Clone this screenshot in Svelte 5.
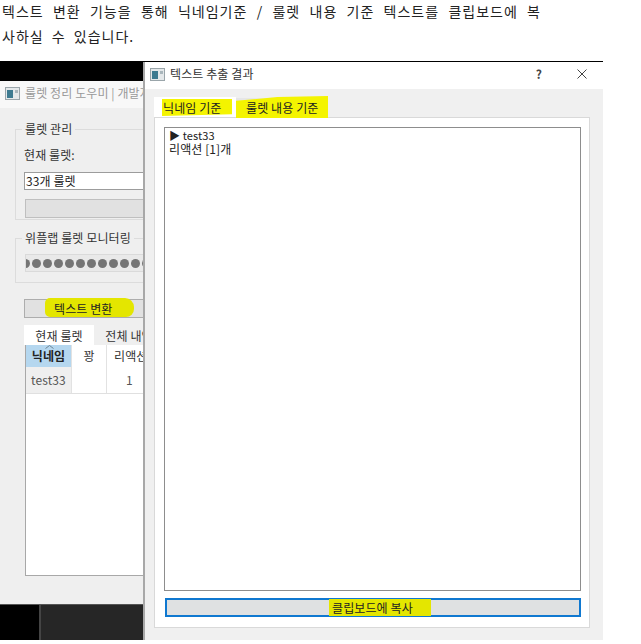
<script lang="ts">
  const dots = Array.from({ length: 14 });
  const columns = [
    { label: '닉네임', cls: 'nick' },
    { label: '꽝', cls: 'miss' },
    { label: '리액션', cls: 'react' }
  ];
</script>

{#snippet winIcon()}
  <svg class="win-icon" width="15" height="13" viewBox="0 0 15 13" aria-hidden="true">
    <rect x="0.5" y="0.5" width="14" height="12" fill="#e4e8ea" stroke="#9aa5aa" />
    <rect x="2" y="3" width="6" height="8" fill="#3d7a90" />
    <rect x="10" y="3" width="3" height="3" fill="#a9b6bc" />
  </svg>
{/snippet}

<div class="page">
  <div class="intro">
    <p class="justified">텍스트 변환 기능을 통해 닉네임기준 / 룰렛 내용 기준 텍스트를 클립보드에 복</p>
    <p class="last">사하실 수 있습니다.</p>
  </div>

  <div class="desktop">
    <div class="taskbar">
      <div class="start"></div>
    </div>

    <section class="window back">
      <header class="titlebar">
        {@render winIcon()}
        <span class="back-title">룰렛 정리 도우미 | 개발자</span>
      </header>
      <div class="back-body">
        <fieldset class="group first">
          <legend>룰렛 관리</legend>
          <div class="label">현재 룰렛:</div>
          <div class="input">33개 룰렛</div>
          <div class="disabled-btn"></div>
        </fieldset>

        <fieldset class="group second">
          <legend>위플랩 룰렛 모니터링</legend>
          <div class="dots">
            {#each dots as _}
              <i></i>
            {/each}
          </div>
        </fieldset>

        <div class="btn convert"><span class="stroke">텍스트 변환</span></div>

        <div class="back-tabs">
          <span class="back-tab on">현재 룰렛</span>
          <span class="back-tab">전체 내역</span>
        </div>
        <div class="table">
          <div class="row head">
            {#each columns as col}
              <div class="cell {col.cls}">
                {#if col.cls === 'nick'}
                  <svg class="sort" width="9" height="4" viewBox="0 0 9 4" aria-hidden="true">
                    <path d="M0.5 3.5 L4.5 0.5 L8.5 3.5" fill="none" stroke="#6d8595" />
                  </svg>
                {/if}
                {col.label}
              </div>
            {/each}
          </div>
          <div class="row body">
            <div class="cell nick">test33</div>
            <div class="cell miss"></div>
            <div class="cell react">1</div>
          </div>
        </div>
      </div>
    </section>

    <section class="window dialog">
      <header class="titlebar">
        {@render winIcon()}
        <span class="dialog-title">텍스트 추출 결과</span>
        <span class="help">?</span>
        <svg class="close" width="10" height="10" viewBox="0 0 10 10" aria-hidden="true">
          <path d="M0.5 0.5 L9.5 9.5 M9.5 0.5 L0.5 9.5" stroke="#444" fill="none" />
        </svg>
      </header>
      <div class="dialog-body">
        <div class="tabs">
          <span class="tab on"><span class="mark">닉네임 기준</span></span>
          <span class="tab other"><span class="mark wide">룰렛 내용 기준</span></span>
        </div>
        <div class="pane">
          <div class="textarea">
            <div class="latin">▶ test33</div>
            <div>리액션 [1]개</div>
          </div>
          <div class="copy-btn"><span class="mark copy">클립보드에 복사</span></div>
        </div>
      </div>
    </section>
  </div>
</div>

<style>
  :global(body) {
    margin: 0;
    background: #fff;
  }

  .page {
    width: 641px;
    height: 644px;
    overflow: hidden;
    font-family: "Noto Sans CJK KR", "Noto Sans", sans-serif;
    color: #222;
  }

  .intro {
    margin-top: -1px;
    padding-left: 2px;
    height: 62px;
    font-size: 14px;
    line-height: 25px;
    letter-spacing: 1px;
  }

  .intro p {
    margin: 0;
    white-space: nowrap;
  }

  .intro .justified {
    width: 539px;
    white-space: normal;
    text-align-last: justify;
  }

  .intro .last {
    word-spacing: 4px;
  }

  .desktop {
    position: relative;
    width: 603px;
    height: 579px;
    overflow: hidden;
    background: #000;
    font-size: 12px;
    line-height: 14px;
    letter-spacing: 0.1px;
  }

  .taskbar {
    position: absolute;
    left: 0;
    right: 0;
    bottom: 0;
    height: 36px;
    background: #262626;
    border-top: 1px solid #555;
    box-sizing: border-box;
  }

  .start {
    width: 39px;
    height: 100%;
    background: #000;
    border-right: 2px solid #444;
  }

  .window {
    position: absolute;
    display: flex;
    flex-direction: column;
    box-sizing: border-box;
  }

  .titlebar {
    display: flex;
    align-items: center;
    height: 27px;
    flex: none;
    padding-bottom: 3px;
    background: #fff;
    box-sizing: border-box;
  }

  .win-icon {
    flex: none;
  }

  /* main window, mostly covered by the dialog */
  .back {
    left: 0;
    top: 20px;
    width: 200px;
    height: 523px;
    background: #efefef;
  }

  .back .titlebar {
    background: #f8f8f8;
    padding-left: 5px;
  }

  .back-title {
    margin-left: 5px;
    color: #9a9a9a;
    white-space: nowrap;
  }

  .back-body {
    display: flex;
    flex-direction: column;
    padding: 14px 0 0 15px;
    color: #333;
  }

  .group {
    margin: 0;
    padding: 0 0 0 8px;
    border: 1px solid #dcdcdc;
    min-inline-size: 0;
  }

  .group legend {
    margin-left: -2px;
    padding: 0 3px;
    line-height: 14px;
    white-space: nowrap;
  }

  .first {
    height: 98px;
    box-sizing: border-box;
  }

  .label {
    margin-top: 12px;
    line-height: 14px;
  }

  .input {
    margin-top: 10px;
    height: 18px;
    box-sizing: border-box;
    border: 1px solid #9c9c9c;
    background: #fff;
    color: #222;
    padding-left: 1px;
    line-height: 16px;
    white-space: nowrap;
  }

  .disabled-btn {
    margin: 9px 0 0 1px;
    height: 19px;
    box-sizing: border-box;
    background: #e1e1e1;
    border: 1px solid #bfbfbf;
  }

  .second {
    margin-top: 11px;
    height: 52px;
    box-sizing: border-box;
  }

  .dots {
    display: flex;
    gap: 2px;
    align-items: center;
    height: 18px;
    margin-top: 9px;
    margin-left: 1px;
    overflow: hidden;
    background: #e9e9e9;
    border: 1px solid #dadada;
    border-right: none;
    box-sizing: border-box;
  }

  .dots i {
    flex: none;
    width: 9px;
    height: 9px;
    border-radius: 50%;
    background: #757575;
  }

  .dots i:first-child {
    margin-left: -5px;
  }

  .btn {
    display: flex;
    margin: 16px 0 0 9px;
    height: 19px;
    width: 140px;
    box-sizing: border-box;
    background: #e1e1e1;
    border: 1px solid #adadad;
    color: #222;
  }

  .stroke {
    display: block;
    margin: -2px 0 0 20px;
    padding: 0 21px 0 9px;
    height: 19px;
    line-height: 21px;
    background: #e4e600;
    border-radius: 5px 9px 8px 5px;
    white-space: nowrap;
  }

  .back-tabs {
    display: flex;
    margin: 7px 0 0 9px;
    height: 20px;
  }

  .back-tab {
    width: 70px;
    flex: none;
    text-align: center;
    line-height: 21px;
    white-space: nowrap;
  }

  .back-tab.on {
    background: #fff;
  }

  .table {
    margin-left: 10px;
    width: 170px;
    height: 231px;
    box-sizing: border-box;
    background: #fff;
    border: 1px solid #a8a8a8;
    border-top: none;
  }

  .row {
    display: flex;
  }

  .head {
    height: 22px;
    line-height: 21px;
  }

  .body {
    height: 26px;
    line-height: 26px;
    border-bottom: 1px solid #e0e0e0;
    color: #555;
  }

  .cell {
    position: relative;
    flex: none;
    text-align: center;
    box-sizing: border-box;
    border-right: 1px solid #e2e2e2;
  }

  .nick {
    width: 46px;
  }

  .miss {
    width: 35px;
  }

  .react {
    width: 60px;
    text-align: left;
    padding-left: 7px;
  }

  .body .react {
    padding-left: 19px;
  }

  .head .nick {
    background: #b5d7ef;
    font-weight: 700;
    color: #222;
  }

  .body .nick {
    background: #efefef;
  }

  .sort {
    position: absolute;
    left: 19px;
    top: 0;
  }

  /* result dialog */
  .dialog {
    left: 143px;
    top: 1px;
    right: 0;
    bottom: 0;
    background: #f0f0f0;
    border-left: 2px solid #a8a8a8;
  }

  .dialog .titlebar {
    padding-left: 5px;
    padding-right: 16px;
  }

  .dialog-title {
    margin-left: 5px;
    flex: 1;
    color: #333;
  }

  .help {
    margin-right: 35px;
    font-weight: 700;
    font-size: 12px;
    color: #444;
  }

  .dialog-body {
    flex: 1;
    display: flex;
    flex-direction: column;
    padding: 8px 13px 12px 9px;
    min-height: 0;
  }

  .tabs {
    display: flex;
    height: 20px;
    flex: none;
  }

  .tab {
    display: block;
    line-height: 18px;
    white-space: nowrap;
  }

  .tab.on {
    width: 82px;
    background: #fff;
    padding-left: 8px;
    box-sizing: border-box;
  }

  .tab.other {
    background: #e6e6e6;
    height: 20px;
    margin-top: 1px;
    width: 92px;
  }

  .mark {
    display: block;
    background: #f4f400;
    color: #222;
  }

  .tab.on .mark {
    margin-right: 4px;
    height: 17px;
    margin-top: 2px;
    line-height: 17px;
    padding-left: 1px;
    clip-path: polygon(0 0, 100% 0, 100% 90%, 0 100%);
  }

  .mark.wide {
    margin-top: -2px;
    width: 92px;
    height: 22px;
    padding-left: 10px;
    box-sizing: border-box;
    line-height: 24px;
    clip-path: polygon(0 22%, 45% 5%, 100% 0, 100% 100%, 0 100%);
  }

  .pane {
    flex: 1;
    display: flex;
    flex-direction: column;
    min-height: 0;
    background: #fff;
    border: 1px solid #d9d9d9;
    padding: 9px 8px 10px 9px;
  }

  .textarea {
    flex: 1;
    box-sizing: border-box;
    border: 1px solid #8d8d8d;
    padding: 1px 4px;
    color: #222;
    line-height: 13px;
  }

  .latin {
    font-size: 11px;
  }

  .copy-btn {
    margin: 7px 0 0 1px;
    height: 19px;
    flex: none;
    box-sizing: border-box;
    background: #dfe1e2;
    border: 2px solid #0f78d0;
    display: flex;
    align-items: center;
  }

  .mark.copy {
    margin-left: 162px;
    padding: 0 18px 0 3px;
    height: 17px;
    line-height: 17px;
    background: #e4e600;
    white-space: nowrap;
  }
</style>
